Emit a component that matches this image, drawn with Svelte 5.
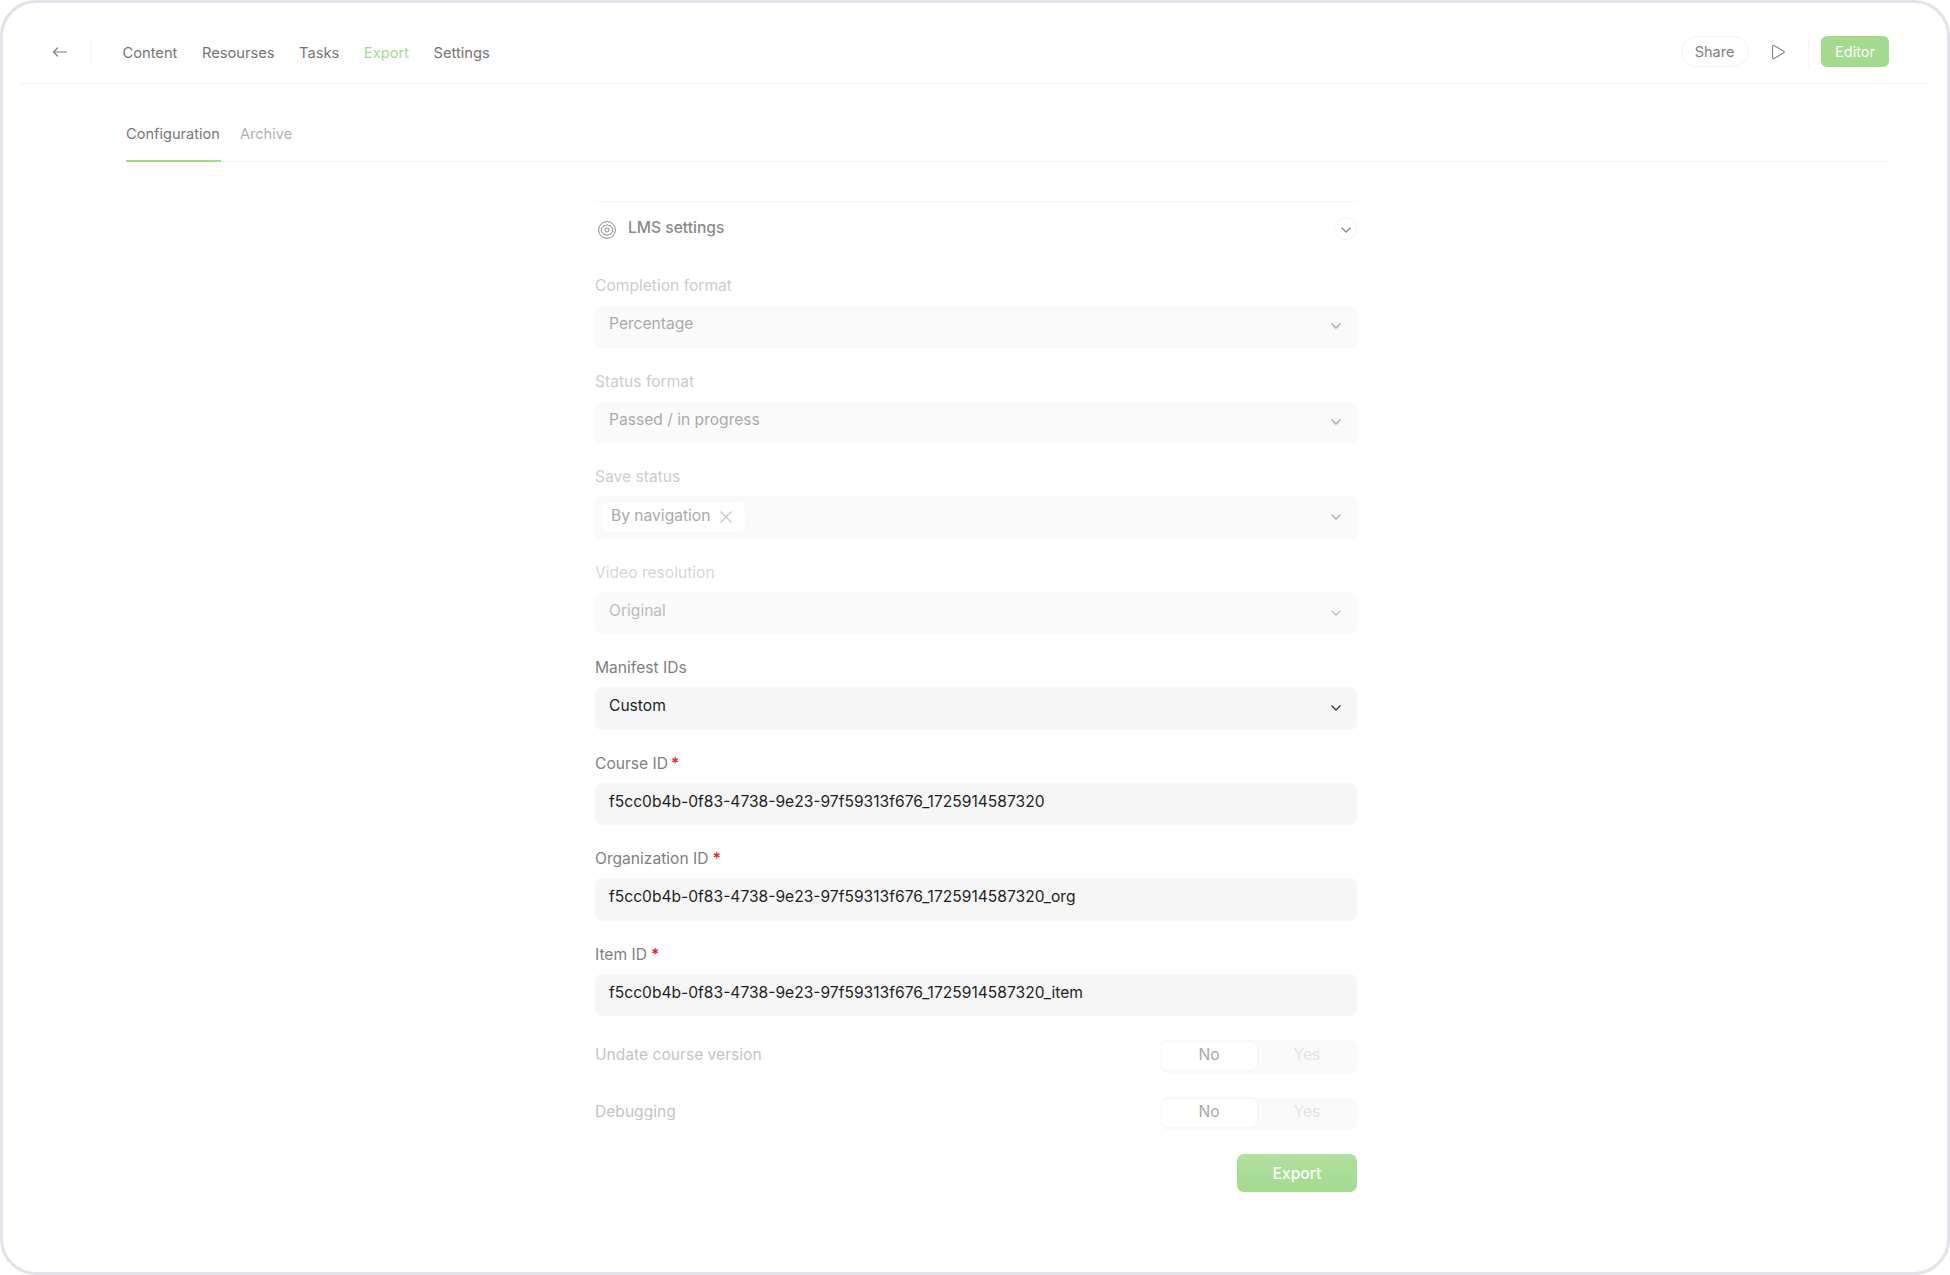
<script>
    const nav = ["Content", "Resourses", "Tasks", "Export", "Settings"];
    const ids = [
        { label: "Course ID", gap: "tight", value: "f5cc0b4b-0f83-4738-9e23-97f59313f676_1725914587320" },
        { label: "Organization ID", gap: "wide", value: "f5cc0b4b-0f83-4738-9e23-97f59313f676_1725914587320_org" },
        { label: "Item ID", gap: "wide", value: "f5cc0b4b-0f83-4738-9e23-97f59313f676_1725914587320_item" }
    ];
</script>

{#snippet chevron()}
    <svg class="chev" width="12" height="8" viewBox="0 0 12 8" fill="none">
        <path d="M1.5 1.5 6 6l4.5-4.5" stroke="currentColor" stroke-width="1.3" />
    </svg>
{/snippet}

<div class="frame">
    <header class="topbar">
        <div class="left">
            <button class="back" aria-label="Back">
                <svg width="16" height="12" viewBox="0 0 16 12" fill="none">
                    <path d="M15 6H1.5M6 1.5 1.5 6 6 10.5" stroke="#808080" stroke-width="1.2" />
                </svg>
            </button>
            <nav class="nav">
                {#each nav as item}
                    <span class:active={item === "Export"}>{item}</span>
                {/each}
            </nav>
        </div>
        <div class="right">
            <button class="share">Share</button>
            <button class="play" aria-label="Play">
                <svg width="15" height="16" viewBox="0 0 15 16" fill="none">
                    <path d="M1.5 2.2c0-.8.8-1.2 1.4-.8l9.8 5.8c.6.4.6 1.2 0 1.6l-9.8 5.8c-.6.4-1.4 0-1.4-.8z" stroke="#808080" stroke-width="1.1" />
                </svg>
            </button>
            <button class="editor">Editor</button>
        </div>
    </header>

    <div class="tabs">
        <span class="tab current">Configuration</span>
        <span class="tab">Archive</span>
    </div>

    <main class="form">
        <div class="section">
            <div class="section-title">
                <svg width="20" height="20" viewBox="0 0 20 20" fill="none" stroke="#8a8a8a" stroke-width="1">
                    <circle cx="10" cy="10" r="8.4" />
                    <path d="M10 4.6l1.6 1 1.9-.1.9 1.7 1.5 1.1-.4 1.7.4 1.7-1.5 1.1-.9 1.7-1.9-.1-1.6 1-1.6-1-1.9.1-.9-1.7-1.5-1.1.4-1.7-.4-1.7 1.5-1.1.9-1.7 1.9.1z" />
                    <circle cx="10" cy="10" r="2" />
                </svg>
                <span>LMS settings</span>
            </div>
            <span class="collapse">{@render chevron()}</span>
        </div>

        <div class="fields">
            <div class="field off">
                <div class="label">Completion format</div>
                <div class="input"><span>Percentage</span>{@render chevron()}</div>
            </div>
            <div class="field off">
                <div class="label">Status format</div>
                <div class="input"><span>Passed / in progress</span>{@render chevron()}</div>
            </div>
            <div class="field off">
                <div class="label">Save status</div>
                <div class="input has-tag">
                    <span class="tag">
                        By navigation
                        <svg width="14" height="14" viewBox="0 0 14 14" fill="none">
                            <path d="M1.5 1.5l11 11M12.5 1.5l-11 11" stroke="#8a8a8a" stroke-width="1.1" />
                        </svg>
                    </span>
                    {@render chevron()}
                </div>
            </div>
            <div class="field off faint">
                <div class="label">Video resolution</div>
                <div class="input"><span>Original</span>{@render chevron()}</div>
            </div>
            <div class="field">
                <div class="label">Manifest IDs</div>
                <div class="input"><span>Custom</span>{@render chevron()}</div>
            </div>
            {#each ids as id}
                <div class="field">
                    <div class="label">{id.label}<span class="req {id.gap}">*</span></div>
                    <div class="input"><span>{id.value}</span></div>
                </div>
            {/each}
        </div>

        <div class="switches">
            <div class="switch-row">
                <span class="switch-label">Undate course version</span>
                <div class="switch"><span class="on">No</span><span>Yes</span></div>
            </div>
            <div class="switch-row">
                <span class="switch-label">Debugging</span>
                <div class="switch"><span class="on">No</span><span>Yes</span></div>
            </div>
        </div>

        <div class="actions">
            <button class="export">Export</button>
        </div>
    </main>
</div>

<style>
    :global(body) {
        background: #fff;
    }
    .frame {
        box-sizing: border-box;
        height: 1275px;
        border: 3px solid #e2e3ea;
        border-radius: 36px;
        padding: 0 17px;
        background: #fff;
        font-family: Inter, "Liberation Sans", sans-serif;
        font-size: 15.6px;
        color: #777;
        overflow: hidden;
    }
    button {
        font: inherit;
        border: 0;
        background: none;
        padding: 0;
        cursor: pointer;
    }
    .topbar {
        height: 81px;
        box-sizing: border-box;
        padding: 33px 41px 0 32px;
        border-bottom: 1px solid #f2f2f2;
        display: flex;
        justify-content: space-between;
        align-items: flex-start;
    }
    .left, .right {
        display: flex;
        align-items: center;
        height: 31px;
    }
    .back {
        width: 38px;
        height: 31px;
        border-right: 1px solid #f5f5f5;
        display: flex;
        align-items: center;
        box-sizing: content-box;
    }
    .nav {
        display: flex;
        gap: 24.5px;
        margin-left: 31.5px;
        padding-top: 2px;
        color: #757575;
        font-size: 14.7px;
    }
    .nav .active {
        color: #a3da8e;
    }
    .share {
        width: 68px;
        height: 31px;
        box-sizing: border-box;
        border: 1px solid #f2f2f2;
        border-radius: 16px;
        color: #808080;
        font-size: 14.5px;
        padding-right: 1px;
    }
    .play {
        display: flex;
        margin-left: 22px;
        padding-right: 22px;
        height: 31px;
        align-items: center;
        border-right: 1px solid #f5f5f5;
    }
    .editor {
        width: 68px;
        height: 31px;
        margin-left: 12px;
        border-radius: 6px;
        background: #a3da8e;
        color: #fff;
        font-size: 14.5px;
    }
    .tabs {
        margin: 0 40px 0 106px;
        height: 78px;
        box-sizing: border-box;
        padding-top: 40px;
        border-bottom: 1px solid #f4f4f4;
        display: flex;
        gap: 19px;
        font-size: 14.6px;
    }
    .tab {
        color: #b0b0b0;
        height: 37px;
        box-sizing: border-box;
        line-height: 20px;
    }
    .tab.current {
        color: #777;
        border-bottom: 2px solid #a3da8e;
        margin-bottom: -1px;
        height: 38px;
        padding-right: 1px;
    }
    .form {
        width: 762px;
        margin: 39px 0 0 575px;
    }
    .section {
        height: 52px;
        box-sizing: border-box;
        border-top: 1px solid #f5f5f5;
        padding-top: 15px;
        display: flex;
        justify-content: space-between;
        align-items: flex-start;
    }
    .section-title {
        display: flex;
        align-items: center;
        gap: 11px;
        padding-left: 2px;
        color: #8a8a8a;
        font-weight: 500;
        height: 20px;
    }
    .section-title svg {
        margin-top: 6px;
    }
    .collapse {
        width: 23px;
        height: 23px;
        box-sizing: border-box;
        border: 1px solid #f2f2f2;
        border-radius: 50%;
        display: flex;
        align-items: center;
        justify-content: center;
    }
    .collapse .chev {
        color: #8a8a8a;
        margin-top: 2px;
    }
    .fields {
        display: grid;
        gap: 21px;
        padding-top: 20px;
    }
    .label {
        height: 24px;
        line-height: 26px;
        margin-bottom: 8px;
        color: #808080;
    }
    .input {
        height: 42.5px;
        box-sizing: border-box;
        border-radius: 7px;
        background: #f6f6f6;
        padding: 0 15px 5px 14px;
        display: flex;
        align-items: center;
        justify-content: space-between;
        color: #1f1f1f;
    }
    .chev {
        margin-top: 5px;
        color: #333;
    }
    .field.off {
        opacity: 0.5;
    }
    .field.off .input {
        color: #555;
    }
    .field.off .label {
        color: #999;
    }
    .field.off .chev {
        color: #555;
    }
    .field.faint {
        opacity: 0.4;
    }
    .has-tag {
        padding-left: 7px;
    }
    .tag {
        display: flex;
        align-items: center;
        gap: 9px;
        height: 30px;
        margin-top: 5px;
        padding: 0 12px 4px 9px;
        box-sizing: border-box;
        border-radius: 6px;
        background: #fff;
        box-shadow: 0 0 2px rgba(0, 0, 0, 0.06);
    }
    .tag svg {
        margin-top: 4px;
    }
    .req {
        color: #f01e2c;
        font-weight: 600;
    }
    .req.tight {
        margin-left: 3px;
    }
    .req.wide {
        margin-left: 4px;
    }
    .switches {
        display: grid;
        gap: 24px;
        padding-top: 24px;
    }
    .switch-row {
        display: flex;
        justify-content: space-between;
        align-items: center;
        height: 33px;
    }
    .switch-label {
        color: #c4c4c4;
        padding-bottom: 4px;
    }
    .switch {
        width: 196px;
        height: 33px;
        box-sizing: border-box;
        padding: 2px 0 0 0;
        border-radius: 7px;
        background: #fafafa;
        display: grid;
        grid-template-columns: 96px 1fr;
        color: #e4e4e4;
        text-align: center;
    }
    .switch span {
        height: 28px;
        line-height: 25px;
    }
    .switch .on {
        background: #fff;
        border-radius: 6px;
        color: #a8a8a8;
        box-shadow: 0 0 2px rgba(0, 0, 0, 0.08);
    }
    .actions {
        display: flex;
        justify-content: flex-end;
        padding-top: 24px;
    }
    .export {
        width: 120px;
        height: 38px;
        border-radius: 7px;
        background: linear-gradient(#b0e09f, #a3da8e);
        color: #fff;
        font-weight: 500;
    }
</style>
